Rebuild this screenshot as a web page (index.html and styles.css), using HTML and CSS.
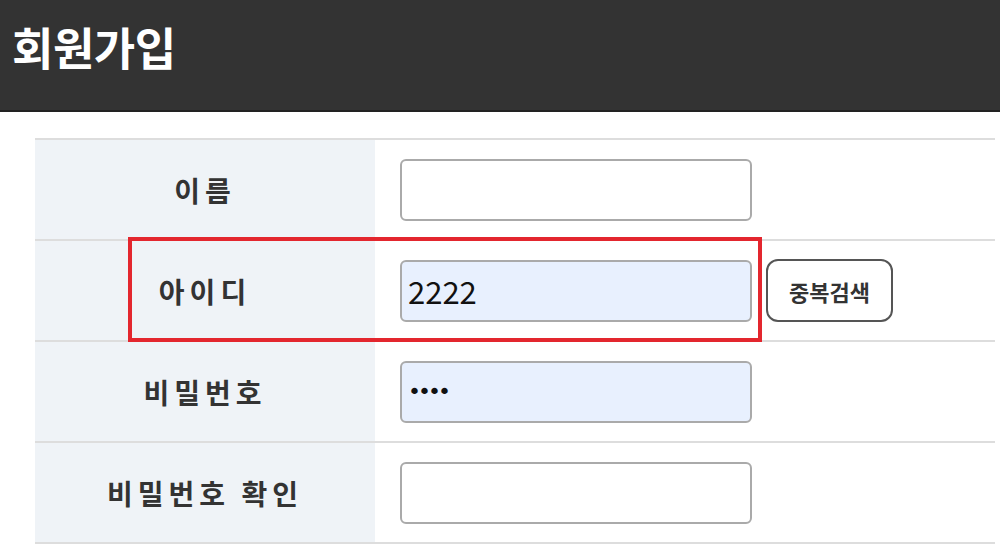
FILE: index.html
```html
<!DOCTYPE html>
<html>
  <head>
    <meta charset="utf-8" />
    <title>회원가입</title>
    <link rel="stylesheet" href="styles.css">
  </head>
  <body>
    <header id="page-header">
      <h1 id="title">회원가입</h1>
    </header>

    <section id="join-form">
      <div class="row">
        <div class="label">이름</div>
        <div class="field">
          <input class="text-input" type="text" value="">
        </div>
      </div>
      <div class="row">
        <div class="label">아이디</div>
        <div class="field">
          <input class="text-input filled" type="text" value="2222">
          <button class="check-button">중복검색</button>
        </div>
      </div>
      <div class="row">
        <div class="label">비밀번호</div>
        <div class="field">
          <input class="text-input filled" type="password" value="2222">
        </div>
      </div>
      <div class="row">
        <div class="label">비밀번호 확인</div>
        <div class="field">
          <input class="text-input" type="password" value="">
        </div>
      </div>

      <div id="highlight"></div>
    </section>
  </body>
</html>
```

FILE: styles.css
```css
body {
  margin: 0;
  padding: 0;
  font-family: "Noto Sans CJK KR", "Noto Sans", sans-serif;
  background-color: #fff;
  color: #333;
}
#page-header {
  height: 110px;
  background-color: #333;
  border-bottom: 2px solid #222;
}
#title {
  margin: 0;
  padding: 14px 0 0 12px;
  font-size: 45px;
  font-weight: bold;
  letter-spacing: -0.5px;
  color: #fff;
}
#join-form {
  position: relative;
  width: 960px;
  margin: 26px 0 0 35px;
  border-top: 2px solid #ddd;
}
.row {
  display: grid;
  grid-template-columns: 340px 1fr;
  height: 99px;
  border-bottom: 2px solid #ddd;
}
.label {
  display: flex;
  align-items: center;
  justify-content: center;
  background-color: #eff3f7;
  font-size: 28px;
  font-weight: bold;
  letter-spacing: 5px;
  color: #333;
}
.field {
  display: flex;
  align-items: center;
  padding-left: 25px;
}
.text-input {
  box-sizing: border-box;
  width: 352px;
  height: 62px;
  padding: 0 6px;
  border: 2px solid #aaa;
  border-radius: 6px;
  background-color: #fff;
  font-family: "Noto Sans CJK KR", "Noto Sans", sans-serif;
  font-size: 31px;
  color: #111;
  outline: none;
}
.filled {
  background-color: #e8f0fe;
}
input[type="password"] {
  font-family: "DejaVu Sans", sans-serif;
  font-size: 22px;
  letter-spacing: -3px;
}
.check-button {
  box-sizing: border-box;
  width: 127px;
  height: 63px;
  margin-left: 14px;
  border: 2px solid #555;
  border-radius: 12px;
  background-color: #fff;
  font-family: "Noto Sans CJK KR", "Noto Sans", sans-serif;
  font-size: 22px;
  font-weight: bold;
  color: #333;
  cursor: pointer;
}
#highlight {
  position: absolute;
  left: 93px;
  top: 97px;
  width: 626px;
  height: 97px;
  border: 4px solid #e3262e;
  pointer-events: none;
}
```
